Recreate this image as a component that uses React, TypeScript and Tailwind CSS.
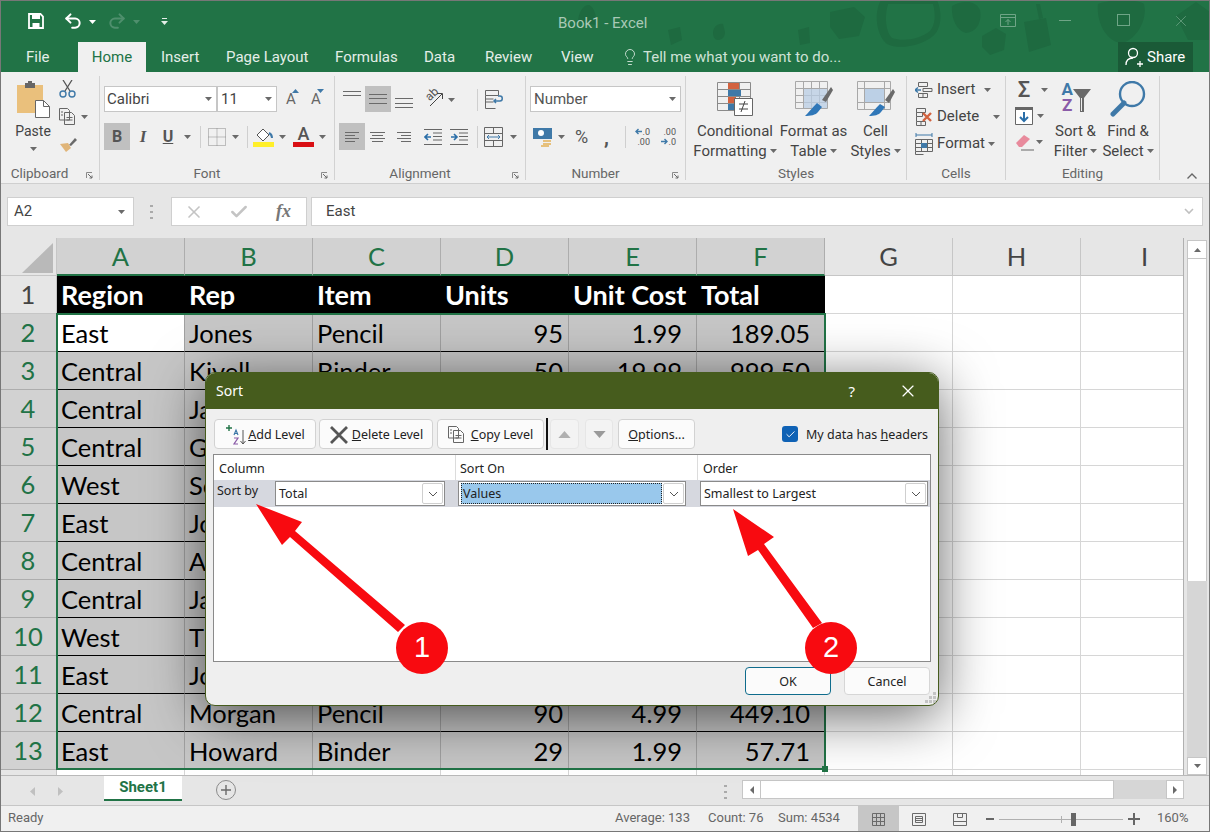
import type { ReactNode } from "react";
import { Check, Lightbulb, Redo2, Undo2, X } from "lucide-react";

const rows = [
  ["East", "Jones", "Pencil", "95", "1.99", "189.05"],
  ["Central", "Kivell", "Binder", "50", "19.99", "999.50"],
  ["Central", "Jardine", "Pencil", "36", "4.99", "179.64"],
  ["Central", "Gill", "Pen", "27", "19.99", "539.73"],
  ["West", "Sorvino", "Pencil", "56", "2.99", "167.44"],
  ["East", "Jones", "Binder", "60", "4.99", "299.40"],
  ["Central", "Andrews", "Pencil", "75", "1.99", "149.25"],
  ["Central", "Jardine", "Pencil", "90", "4.99", "449.10"],
  ["West", "Thompson", "Pencil", "32", "1.99", "63.68"],
  ["East", "Jones", "Binder", "60", "8.99", "539.40"],
  ["Central", "Morgan", "Pencil", "90", "4.99", "449.10"],
  ["East", "Howard", "Binder", "29", "1.99", "57.71"],
];
const heads = ["Region", "Rep", "Item", "Units", "Unit Cost", "Total"];

function Ic({ w, h, className, children }: { w: number; h: number; className?: string; children: ReactNode }) {
  return (
    <svg width={w} height={h} viewBox={`0 0 ${w} ${h}`} fill="none" className={`shrink-0 ${className ?? ""}`}>
      {children}
    </svg>
  );
}

function Caret({ className, color = "#6a6a6a" }: { className?: string; color?: string }) {
  return (
    <Ic w={7} h={4} className={className}>
      <path d="M0 0h7L3.5 4z" fill={color} />
    </Ic>
  );
}

function Lines({ w, ys, xs }: { w: number; ys: number[]; xs?: number[][] }) {
  return (
    <Ic w={w} h={16}>
      {ys.map((y, i) => (
        <path key={y} d={`M${xs ? xs[i][0] : 0} ${y + 0.5}H${xs ? xs[i][1] : w}`} stroke="#6a6a6a" />
      ))}
    </Ic>
  );
}

function Launcher({ className }: { className?: string }) {
  return (
    <Ic w={7} h={7} className={className}>
      <path d="M.5 6V.5H6" stroke="#8a8a8a" />
      <path d="M2 2l4 4M6 3.5V6H3.5" stroke="#6a6a6a" />
    </Ic>
  );
}

function Group({ w, label, launcher, children }: { w: string; label: string; launcher?: boolean; children: ReactNode }) {
  return (
    <div className={`relative flex h-[104px] flex-col border-r border-[#d2d2d2] ${w}`}>
      <div className="h-[90px]">{children}</div>
      <div className={`flex h-[14px] items-center justify-center text-[13.5px] leading-[14px] text-[#666] ${launcher ? "pr-[20px]" : ""}`}>{label}</div>
      {launcher && <Launcher className="absolute bottom-[1px] right-[6px]" />}
    </div>
  );
}

function Sep({ className }: { className?: string }) {
  return <div className={`h-[22px] w-px shrink-0 bg-[#cfcfcf] ${className ?? ""}`} />;
}

function BigBtn({ w, ml, icon, l1, l2 }: { w: string; ml: string; icon: ReactNode; l1: string; l2: string }) {
  return (
    <div className={`flex flex-col items-center pt-[5px] text-[15px] leading-[20px] text-[#444] ${w} ${ml}`}>
      <div className="flex h-[36px] items-center">{icon}</div>
      <div className="mt-[4px] whitespace-nowrap">{l1}</div>
      <div className="flex items-center gap-[3px] whitespace-nowrap">
        {l2}
        <Caret />
      </div>
    </div>
  );
}

function CellsRow({ icon, label, gap }: { icon: ReactNode; label: string; gap: string }) {
  return (
    <div className="flex h-[27px] items-center pl-[8px] text-[15px] text-[#444]">
      {icon}
      <span className="ml-[4px] whitespace-nowrap">{label}</span>
      <Caret className={gap} />
    </div>
  );
}

function Ribbon() {
  return (
    <div className="flex h-[112px] border-b border-[#cfcfcf] bg-[#f0f0f0] pt-[4px] font-['Roboto',sans-serif]">
      <Group w="w-[100px]" label="Clipboard" launcher>
        <div className="flex">
          <div className="ml-[16px] flex w-[34px] flex-col items-center pt-[4px]">
            <Ic w={34} h={38}>
              <path d="M1 5h26v28H1z" fill="#eac07c" />
              <path d="M9 3h10v5H9z" fill="#666" />
              <path d="M12 1h4v3h-4z" fill="#666" />
              <path d="M19.500 20.500h8l6 6v11h-14z" fill="#fff" stroke="#666" />
              <path d="M27.500 20.500v6h6" stroke="#666" />
            </Ic>
            <div className="mt-[4px] text-[14px] leading-[18px] text-[#444]">Paste</div>
            <Caret className="mt-[7px]" />
          </div>
          <div className="ml-[9px] flex flex-col pt-[4px]">
            <Ic w={17} h={18}>
              <path d="M4 0l7 11M13 0L6 11" stroke="#555" strokeWidth={1.3} />
              <circle cx="4" cy="14" r="3" stroke="#3f79a8" strokeWidth={1.4} />
              <circle cx="13" cy="14" r="3" stroke="#3f79a8" strokeWidth={1.4} />
            </Ic>
            <div className="mt-[10px] flex items-center gap-[4px]">
              <Ic w={18} h={17}>
                <path d="M.5.500h8l2 2V12H.5z M5.500 4.500h7l3 3v9h-10z" fill="#f0f0f0" stroke="#666" />
                <path d="M7.500 9.500h6M7.500 12h6M2 4h2M2 7h2" stroke="#666" />
              </Ic>
              <Caret />
            </div>
            <Ic w={18} h={16} className="mt-[11px]">
              <path d="M10 9l6-7 2 2-6 6z" fill="#6a6a6a" />
              <path d="M1 8l8-1 3 5-5 4z" fill="#e0b579" />
            </Ic>
          </div>
        </div>
      </Group>

      <Group w="w-[235px]" label="Font" launcher>
        <div className="flex items-center pl-[4px] pt-[10px]">
          <div className="flex h-[26px] w-[113px] items-center justify-between border border-[#c6c6c6] bg-white pl-[2px] pr-[4px] text-[15px] text-[#444]">
            Calibri
            <Caret />
          </div>
          <div className="flex h-[26px] w-[60px] items-center justify-between border border-[#c6c6c6] bg-white pl-[3px] pr-[4px] text-[15px] text-[#444]">
            11
            <Caret />
          </div>
          <div className="relative ml-[6px] w-[16px] text-center text-[15px] text-[#666]">
            A
            <Caret color="#3f79a8" className="absolute right-[0px] top-[1px] rotate-180" />
          </div>
          <div className="relative ml-[9px] w-[16px] text-center text-[15px] text-[#666]">
            A
            <Caret color="#3f79a8" className="absolute right-[0px] top-[1px]" />
          </div>
        </div>
        <div className="mt-[11px] flex h-[27px] items-center pl-[4px] text-[#555]">
          <div className="flex h-[27px] w-[26px] items-center justify-center bg-[#c0c0c0] text-[16px] font-bold">B</div>
          <div className="ml-[5px] w-[16px] text-center font-['Liberation_Serif',serif] text-[17px] font-bold italic">I</div>
          <div className="ml-[9px] w-[16px] text-center text-[16px] font-bold underline">U</div>
          <Caret className="ml-[8px]" />
          <Sep className="ml-[9px]" />
          <Ic w={18} h={18} className="ml-[7px]">
            <path d="M.5.500h17v17H.5z M9 .5v17M.5 9h17" stroke="#8a8a8a" strokeDasharray="1 1" />
          </Ic>
          <Caret className="ml-[6px]" />
          <Sep className="ml-[8px]" />
          <Ic w={21} h={21} className="ml-[5px]">
            <path d="M4 9l6-6 6 6-6 6z" fill="#fff" stroke="#555" />
            <path d="M16 7c2 1 3 3 3 5" stroke="#3f79a8" strokeWidth={2} />
            <path d="M0 16h21v5H0z" fill="#ffef2a" />
          </Ic>
          <Caret className="ml-[5px]" />
          <div className="relative ml-[7px] h-[21px] w-[21px] text-center text-[18px] font-medium leading-[16px]">
            A
            <div className="absolute bottom-0 left-0 h-[5px] w-[21px] bg-[#d90f14]" />
          </div>
          <Caret className="ml-[5px]" />
        </div>
      </Group>

      <Group w="w-[191px]" label="Alignment" launcher>
        <div className="flex h-[36px] items-end">
          <div className="mb-[5px] ml-[8px]"><Lines w={18} ys={[0, 4]} /></div>
          <div className="ml-[4px] flex h-[26px] w-[26px] items-center justify-center bg-[#c0c0c0]"><Lines w={18} ys={[3, 7, 12]} /></div>
          <div className="mb-[2px] ml-[4px]"><Lines w={18} ys={[4, 9, 13]} /></div>
          <div className="relative mb-[4px] ml-[11px] h-[20px] w-[20px] text-[#555]">
            <span className="absolute left-[1px] top-[-1px] -rotate-45 text-[12px] leading-[14px]">ab</span>
            <Ic w={20} h={20} className="absolute left-0 top-0">
              <path d="M6 18L18 6M13 5.500h5.500V11" stroke="#444" />
            </Ic>
          </div>
          <Caret className="mb-[10px] ml-[4px]" />
          <Sep className="mb-[1px] ml-[22px]" />
          <div className="mb-[2px] ml-[7px]">
            <Ic w={19} h={20}>
              <path d="M.5.500h13v5H.5zM.5 5.500v13h10M.5 12h8M.5 9h8" stroke="#666" />
              <path d="M9 11h6c3 0 3-5 0-5h-2M11 9l-2 2 2 2" stroke="#3f79a8" strokeWidth={1.5} />
            </Ic>
          </div>
        </div>
        <div className="mt-[11px] flex h-[27px] items-center">
          <div className="ml-[4px] flex h-[27px] w-[26px] items-center justify-center bg-[#c0c0c0]"><Lines w={14} ys={[3, 6, 9, 12]} xs={[[0, 14], [0, 10], [0, 14], [0, 10]]} /></div>
          <div className="ml-[5px]"><Lines w={17} ys={[3, 6, 9, 12]} xs={[[0, 15], [2, 13], [0, 15], [2, 13]]} /></div>
          <div className="ml-[9px]"><Lines w={16} ys={[3, 6, 9, 12]} xs={[[1, 15], [5, 15], [1, 15], [5, 15]]} /></div>
          <Ic w={18} h={18} className="ml-[12px]">
            <path d="M0 1.500h18M0 16.500h18M9 5h9M9 8.500h9M9 12h9" stroke="#666" />
            <path d="M7 9H1M4 6L1 9l3 3" stroke="#2a6ea8" strokeWidth={1.6} />
          </Ic>
          <Ic w={18} h={18} className="ml-[8px]">
            <path d="M0 1.500h18M0 16.500h18M9 5h9M9 8.500h9M9 12h9" stroke="#666" />
            <path d="M1 9h6M4 6l3 3-3 3" stroke="#2a6ea8" strokeWidth={1.6} />
          </Ic>
          <Sep className="ml-[9px]" />
          <Ic w={19} h={20} className="ml-[6px]">
            <path d="M.5.500h18v19H.5zM.5 6.500h18M.5 13.500h18M9.500.5v6M9.500 13.500v6" stroke="#666" />
            <path d="M3 10h13M5 8l-2 2 2 2M14 8l2 2-2 2" stroke="#3f79a8" />
          </Ic>
          <Caret className="ml-[7px]" />
        </div>
      </Group>

      <Group w="w-[160px]" label="Number" launcher>
        <div className="ml-[4px] mt-[10px] flex h-[26px] w-[151px] items-center justify-between border border-[#c6c6c6] bg-white pl-[3px] pr-[4px] text-[15px] text-[#555]">
          Number
          <Caret />
        </div>
        <div className="mt-[11px] flex h-[27px] items-center text-[#555]">
          <Ic w={20} h={20} className="ml-[7px]">
            <path d="M0 1h19v11H0z" fill="#3f79a8" />
            <circle cx="8" cy="6" r="3" fill="#fff" />
            <path d="M10 13h8v2h-8zM10 16h8v2h-8zM8 18h8v2H8z" fill="#e6c07c" />
          </Ic>
          <Caret className="ml-[5px]" />
          <div className="ml-[8px] w-[17px] text-center text-[18px]">%</div>
          <div className="ml-[13px] w-[7px] text-center text-[20px] font-bold leading-[14px]">,</div>
          <Sep className="ml-[15px]" />
          <div className="ml-[9px] flex w-[15px] flex-col items-end text-[9px] leading-[10px]">
            <span className="flex items-center gap-px"><Ic w={7} h={7}><path d="M7 3.500H1M3.500 1L1 3.500 3.500 6" stroke="#3f79a8" strokeWidth={1.4} /></Ic>.0</span>
            <span>.00</span>
          </div>
          <div className="ml-[10px] flex w-[16px] flex-col items-end text-[9px] leading-[10px]">
            <span>.00</span>
            <span className="flex items-center gap-px"><Ic w={7} h={7}><path d="M0 3.500h6M3.500 1L6 3.500 3.500 6" stroke="#3f79a8" strokeWidth={1.4} /></Ic>.0</span>
          </div>
        </div>
      </Group>

      <Group w="w-[221px]" label="Styles">
        <div className="flex">
          <BigBtn
            w="w-[84px]"
            ml="ml-[7px]"
            l1="Conditional"
            l2="Formatting"
            icon={
              <Ic w={36} h={36}>
                <path d="M.5 1.500h33v28H.5zM.5 8.500h33M.5 15.500h33M.5 22.500h33M11.500 1.500v28M22.500 1.500v28" stroke="#8a8a8a" />
                <path d="M11 2h11v6H11zM11 16h8v6h-8z" fill="#d2623f" />
                <path d="M11 9h13v6H11zM11 23h6v6h-6z" fill="#3f79a8" />
                <path d="M17.500 17.500h18v17h-18z" fill="#fff" stroke="#666" />
                <path d="M22 23h9M22 28h9M28 20l-4 11" stroke="#444" />
              </Ic>
            }
          />
          <BigBtn
            w="w-[65px]"
            ml="ml-[4px]"
            l1="Format as"
            l2="Table"
            icon={
              <Ic w={38} h={36}>
                <path d="M.5.500h32v27H.5zM.5 7.500h32M.5 14.500h32M.5 21.500h32M8.500.5v27M16.500.5v27M24.500.5v27" stroke="#a8a8a8" />
                <path d="M9 8h23v19H9z" fill="#b9cee4" opacity=".75" />
                <path d="M27 19l9-13 2 3-7 12z" fill="#6a6a6a" />
                <path d="M22 22l5 4-4 5c-2 3-8 4-13 4 3-3 7-8 12-13z" fill="#2f77b8" />
              </Ic>
            }
          />
          <BigBtn
            w="w-[49px]"
            ml="ml-[5px]"
            l1="Cell"
            l2="Styles"
            icon={
              <Ic w={38} h={36}>
                <path d="M.5.500h33v28H.5zM.5 7.500h33M7.500.5v28M.5 21.500h33M27.500.5v28" stroke="#a8a8a8" />
                <path d="M8 8h19v13H8z" fill="#bcd0e6" />
                <path d="M28 19l8-11 2 3-6 11z" fill="#6a6a6a" />
                <path d="M23 23l5 3-4 5c-2 3-7 4-12 4 3-3 6-7 11-12z" fill="#2f77b8" />
              </Ic>
            }
          />
        </div>
      </Group>

      <Group w="w-[99px]" label="Cells">
        <CellsRow
          label="Insert"
          gap="ml-[9px]"
          icon={
            <Ic w={18} h={16}>
              <path d="M3.500.5h9v4h-9zM3.500 11.500h9v4h-9zM8 11.500v4" stroke="#666" />
              <path d="M8 6.500h9v3H8z" fill="#eee" stroke="#666" />
              <path d="M6 8H0M3 5.500L0 8l3 2.500" stroke="#3f79a8" strokeWidth={1.4} />
            </Ic>
          }
        />
        <CellsRow
          label="Delete"
          gap="ml-[14px]"
          icon={
            <Ic w={18} h={18}>
              <path d="M1.500.5h9v4h-9zM1.500 4.500h6v4h-6zM1.500 8.500v5M1.500 13.500h9v4h-9zM6 13.500v4" stroke="#666" />
              <path d="M8 5l8 8M16 5l-8 8" stroke="#d2623f" strokeWidth={2.400} />
            </Ic>
          }
        />
        <CellsRow
          label="Format"
          gap="ml-[3px]"
          icon={
            <Ic w={18} h={22}>
              <path d="M1 2h16M1 0v4M17 0v4" stroke="#3f79a8" />
              <path d="M.5 6.500h17v12H.5zM.5 10.500h17M.5 14.500h17M6.500 6.500v12M12.500 6.500v12" stroke="#666" />
              <path d="M6 10h6v5H6z" fill="#3f79a8" />
              <path d="M.5 18.500v3h8" stroke="#666" />
            </Ic>
          }
        />
      </Group>

      <Group w="w-[154px]" label="Editing">
        <div className="flex">
          <div className="ml-[9px] w-[34px]">
            <div className="flex h-[26px] items-center gap-[8px] pt-[2px]">
              <div className="w-[18px] text-center text-[22px] font-medium leading-[20px] text-[#555]">Σ</div>
              <Caret />
            </div>
            <div className="flex h-[26px] items-center gap-[4px] pt-[1px]">
              <Ic w={18} h={18}>
                <path d="M.5.500h17v17H.5z" fill="#fff" stroke="#666" />
                <path d="M0 0h18v3H0z" fill="#666" />
                <path d="M9 5v9M5 10l4 4 4-4" stroke="#2a6ea8" strokeWidth={2} />
              </Ic>
              <Caret />
            </div>
            <div className="flex h-[26px] items-center gap-[4px] pt-[2px]">
              <Ic w={20} h={18}>
                <path d="M1 10l8-8 6 4-8 8H4z" fill="#e88a9c" />
                <path d="M6 17h13" stroke="#666" />
              </Ic>
              <Caret className="-ml-[3px]" />
            </div>
          </div>
          <div className="ml-[3px] flex w-[47px] flex-col items-center pt-[5px] text-[15px] leading-[20px] text-[#444]">
            <div className="flex h-[36px] w-[40px] pl-[6px]">
              <div className="flex flex-col items-center text-[17px] font-bold leading-[16px]">
                <span className="text-[#3f79a8]">A</span>
                <span className="text-[#8a5ba8]">Z</span>
              </div>
              <Ic w={18} h={24} className="mt-[8px]">
                <path d="M0 0h18l-7 9v14H7V9z" fill="#6a6a6a" />
                <path d="M8.500 9v13" stroke="#eee" />
              </Ic>
            </div>
            <div className="mt-[4px] whitespace-nowrap">Sort &amp;</div>
            <div className="flex items-center gap-[3px]">Filter<Caret /></div>
          </div>
          <div className="ml-[4px] flex w-[50px] flex-col items-center pt-[5px] text-[15px] leading-[20px] text-[#444]">
            <Ic w={36} h={36}>
              <circle cx="22" cy="13" r="12" stroke="#3f79a8" strokeWidth={2.400} />
              <path d="M14 22L3 33" stroke="#3f79a8" strokeWidth={5} strokeLinecap="round" />
            </Ic>
            <div className="mt-[4px] whitespace-nowrap">Find &amp;</div>
            <div className="flex items-center gap-[3px]">Select<Caret /></div>
          </div>
        </div>
      </Group>

      <div className="flex h-[104px] flex-1 items-end justify-end pb-[1px] pr-[13px]">
        <Ic w={10} h={6}>
          <path d="M.5 5.500L5 1l4.500 4.500" stroke="#666" strokeWidth={1.4} />
        </Ic>
      </div>
    </div>
  );
}

function TitleArea() {
  return (
    <div className="relative h-[72px] bg-[#217346] font-['Roboto',sans-serif] text-[15px]">
      <svg className="absolute inset-0" width={1210} height={72} fill="#1e6a40">
        <path d="M578 22c0-8 5-17 10-17s8 8 9 20zM668 30l12-3 2 13-11 5zM713 33c0-6 5-10 10-9l2 8c0 6-4 8-7 8s-5-3-5-7zM798 30l11-3 1 16-10 2zM830 12l24-5 11 10-6 19-20 3-9-12z" />
        <path fillRule="evenodd" d="M881 0h56c6 14 4 30-4 36-12 10-34 14-46 8-10-8-14-30-6-44zm7 4c-4 14-2 28 4 34 12 4 28 1 38-7 5-6 6-16 3-27z" />
        <path d="M952 6c10-6 24-6 28 4 2 10-2 22-14 23-10-2-15-16-14-27zM982 36l14-8 10 6-2 16-14 5-8-8zM1024 22l22-4 5 27-22 7zM1040 4l3 14-4 1-3-15zM1098 4c8-4 38-6 46 0 4 16-8 36-22 39-16-1-26-22-24-39zM1176 16l20-14 14 10v28l-22 0z" />
      </svg>
      <div className="relative flex h-[42px] items-start pt-[13px]">
        <Ic w={16} h={16} className="ml-[28px]">
          <path d="M1 1h11.500L15 3.500V15H1z" stroke="#fff" strokeWidth={1.8} />
          <path d="M4 1h8v5H4z" fill="#fff" />
          <path d="M4.500 15v-5h7v5z M7.500 11h2v4h-2z" fill="#fff" />
        </Ic>
        <Undo2 size={20} color="#fff" strokeWidth={2.400} className="ml-[19px] -mt-[2px]" />
        <Caret color="#fff" className="ml-[6px] mt-[7px]" />
        <Redo2 size={20} color="#4f8f6d" strokeWidth={2.400} className="ml-[11px] -mt-[2px]" />
        <Caret color="#4f8f6d" className="ml-[6px] mt-[7px]" />
        <Ic w={7} h={7} className="ml-[21px] mt-[5px]">
          <path d="M1 .5h5" stroke="#e4eee8" />
          <path d="M0 3h7L3.500 7z" fill="#e4eee8" />
        </Ic>
        <div className="absolute left-[558px] top-[14px] text-[15px] leading-[18px] text-[#a9c9b6]">Book1 - Excel</div>
        <div className="absolute left-[1000px] top-[14px]">
          <Ic w={16} h={13}>
            <path d="M.5.500h15v12H.5zM.5 3.500h15M8 11V5.500M5.500 8L8 5.500 10.500 8" stroke="#6fa587" />
          </Ic>
        </div>
        <div className="absolute left-[1059px] top-[20px] h-px w-[12px] bg-[#6fa587]" />
        <div className="absolute left-[1117px] top-[14px] h-[12px] w-[13px] border border-[#6fa587]" />
        <div className="absolute left-[1172px] top-[12px]">
          <X size={18} color="#6fa587" strokeWidth={1} />
        </div>
      </div>
      <div className="relative flex h-[30px] items-center text-[#e4eee8]">
        <div className="w-[78px] pl-[26px]">File</div>
        <div className="flex h-[30px] w-[68px] items-center justify-center bg-[#f0f0f0] text-[#217346]">Home</div>
        <div className="ml-[15px] flex gap-[29px] whitespace-nowrap">
          <span className="w-[36px]">Insert</span>
          <span className="w-[80px]">Page Layout</span>
          <span className="w-[60px]">Formulas</span>
          <span className="w-[32px]">Data</span>
          <span className="w-[47px]">Review</span>
          <span className="w-[32px]">View</span>
        </div>
        <Lightbulb size={18} color="#d5e6dc" strokeWidth={1.2} className="ml-[28px]" />
        <span className="ml-[4px] whitespace-nowrap text-[#cfe2d7]">Tell me what you want to do...</span>
        <div className="ml-auto mr-[17px] flex h-[30px] w-[75px] items-center gap-[4px] bg-[#1a5a37] pl-[7px] text-white">
          <Ic w={18} h={20}>
            <circle cx="8" cy="6" r="4.500" stroke="#fff" strokeWidth={1.3} />
            <path d="M1 18c0-5 3-7 7-7M12 17h6M15 14v6" stroke="#fff" strokeWidth={1.3} />
          </Ic>
          Share
        </div>
      </div>
    </div>
  );
}

function FormulaBar() {
  return (
    <div className="flex h-[54px] items-start bg-[#e6e6e6] pt-[13px] font-['Roboto',sans-serif] text-[15px] text-[#444]">
      <div className="ml-[7px] flex h-[29px] w-[127px] items-center justify-between border border-[#cfcfcf] bg-white pl-[6px] pr-[8px]">
        A2
        <Caret />
      </div>
      <div className="ml-[16px] mt-[8px] flex h-[14px] w-[3px] flex-col justify-between">
        <div className="h-[2px] w-[3px] bg-[#aaa]" />
        <div className="h-[2px] w-[3px] bg-[#aaa]" />
        <div className="h-[2px] w-[3px] bg-[#aaa]" />
      </div>
      <div className="ml-[18px] flex h-[29px] w-[136px] items-center border border-[#cfcfcf] bg-white">
        <X size={20} color="#c4c4c4" strokeWidth={2} className="ml-[12px]" />
        <Check size={20} color="#c4c4c4" strokeWidth={3} className="ml-[25px]" />
        <span className="ml-[27px] font-['Liberation_Serif',serif] text-[18px] font-bold italic text-[#777]">fx</span>
      </div>
      <div className="ml-[4px] flex h-[29px] w-[892px] items-center justify-between border border-[#cfcfcf] bg-white pl-[14px] pr-[8px]">
        East
        <Ic w={10} h={7}>
          <path d="M1 1l4 4 4-4" stroke="#c0c0c0" strokeWidth={1.6} />
        </Ic>
      </div>
    </div>
  );
}

function Sheet() {
  const letters = ["A", "B", "C", "D", "E", "F", "G", "H", "I"];
  return (
    <div className="flex h-[537px] bg-[#e6e6e6]">
      <div className="relative w-[1184px] overflow-hidden border-r border-[#b0b0b0] bg-white font-['Lato',sans-serif] text-[25.5px] text-black">
        <div className="grid w-[1209px] grid-cols-[57px_repeat(9,128px)] grid-rows-[repeat(14,38px)_5px]">
          <div className="relative border-b border-r border-[#c6c6c6] bg-[#e6e6e6]">
            <Ic w={31} h={30} className="absolute left-[22px] top-[5px]">
              <path d="M31 0v30H0z" fill="#b9b9b9" />
            </Ic>
          </div>
          {letters.map((l, i) =>
            i < 6 ? (
              <div key={l} className="flex items-center justify-center border-b-2 border-r border-b-[#217346] border-r-[#adadad] bg-[#d2d2d2] text-[#217346]">{l}</div>
            ) : (
              <div key={l} className="flex items-center justify-center border-b border-r border-[#c6c6c6] bg-[#e6e6e6] text-[#444]">{l}</div>
            ),
          )}

          <div className="flex items-center justify-center border-b border-r border-[#c6c6c6] bg-[#e6e6e6] text-[#444]">1</div>
          {heads.map((h) => (
            <div key={h} className="flex items-center bg-black pl-[4px] pt-[1px] text-[27px] font-bold text-white">{h}</div>
          ))}
          <div className="border-b border-r border-[#d6d6d6]" />
          <div className="border-b border-r border-[#d6d6d6]" />
          <div className="border-b border-r border-[#d6d6d6]" />

          {rows.map((r, i) => (
            <div key={i} className="contents">
              <div className="flex items-center justify-center border-b border-r border-[#adadad] bg-[#d2d2d2] text-[#217346]">{i + 2}</div>
              {r.map((c, j) => (
                <div
                  key={j}
                  className={`flex items-center border-b border-r border-b-black border-r-[#a0a0a0] pt-[1px] ${i === 0 && j === 0 ? "bg-white" : "bg-[#c6c6c6]"} ${j === 3 ? "justify-end pr-[5px]" : j > 3 ? "justify-end pr-[14px]" : "pl-[4px]"}`}
                >
                  {c}
                </div>
              ))}
              <div className="border-b border-r border-[#d6d6d6]" />
              <div className="border-b border-r border-[#d6d6d6]" />
              <div className="border-b border-r border-[#d6d6d6]" />
            </div>
          ))}

          <div className="border-r border-[#c6c6c6] bg-[#e6e6e6]" />
          {letters.map((l) => (
            <div key={l} className="border-r border-[#d6d6d6]" />
          ))}
        </div>
        <div className="absolute left-[56px] top-[75px] h-[457px] w-[770px] border-2 border-[#217346]" />
        <div className="absolute left-[822px] top-[528px] h-[6px] w-[6px] bg-[#217346]" />
      </div>
      <div className="ml-[3px] flex w-[20px] flex-col pt-[2px]">
        <div className="flex h-[19px] items-center justify-center border border-[#c6c6c6] bg-white">
          <Caret className="rotate-180" />
        </div>
        <div className="h-[322px] border-x border-[#c6c6c6] bg-white" />
        <div className="flex-1 bg-[#d6d6d6]" />
        <div className="flex h-[18px] items-center justify-center border border-[#c6c6c6] bg-white">
          <Caret />
        </div>
      </div>
    </div>
  );
}

function Tabs() {
  return (
    <div className="flex h-[30px] border-t border-[#b9b9b9] bg-[#e6e6e6] font-['Roboto',sans-serif]">
      <Ic w={5} h={9} className="ml-[30px] mt-[11px]">
        <path d="M5 0v9L0 4.500z" fill="#c0c0c0" />
      </Ic>
      <Ic w={5} h={9} className="ml-[23px] mt-[11px]">
        <path d="M0 0v9l5-4.500z" fill="#c0c0c0" />
      </Ic>
      <div className="ml-[41px] flex h-[25px] w-[78px] items-center justify-center border-b-2 border-[#217346] bg-white text-[15px] font-bold text-[#217346]">Sheet1</div>
      <Ic w={20} h={20} className="ml-[34px] mt-[4px]">
        <circle cx="10" cy="10" r="9.500" stroke="#8a8a8a" />
        <path d="M5 10h10M10 5v10" stroke="#6a6a6a" strokeWidth={1.400} />
      </Ic>
      <div className="ml-[488px] mt-[9px] flex h-[14px] w-[3px] flex-col justify-between">
        <div className="h-[2px] w-[3px] bg-[#aaa]" />
        <div className="h-[2px] w-[3px] bg-[#aaa]" />
        <div className="h-[2px] w-[3px] bg-[#aaa]" />
      </div>
      <div className="ml-[15px] mt-[4px] flex h-[19px] w-[442px]">
        <div className="flex w-[19px] items-center justify-center border border-[#c6c6c6] bg-white">
          <Ic w={4} h={8}><path d="M4 0v8L0 4z" fill="#6a6a6a" /></Ic>
        </div>
        <div className="w-[353px] border-y border-r border-[#c6c6c6] bg-white" />
        <div className="flex-1 bg-[#d6d6d6]" />
        <div className="flex w-[18px] items-center justify-center border border-[#c6c6c6] bg-white">
          <Ic w={4} h={8}><path d="M0 0v8l4-4z" fill="#6a6a6a" /></Ic>
        </div>
      </div>
    </div>
  );
}

function StatusBar() {
  return (
    <div className="flex h-[27px] items-center border-t border-[#c6c6c6] bg-[#f0f0f0] font-['Roboto',sans-serif] text-[13px] text-[#666]">
      <span className="mb-[2px] ml-[8px] w-[36px]">Ready</span>
      <span className="mb-[2px] ml-[571px] w-[76px] whitespace-nowrap">Average: 133</span>
      <span className="mb-[2px] ml-[17px] w-[54px] whitespace-nowrap">Count: 76</span>
      <span className="mb-[2px] ml-[16px] w-[60px] whitespace-nowrap">Sum: 4534</span>
      <div className="ml-[20px] flex h-[26px] w-[41px] items-center justify-center bg-[#c6c6c6]">
        <Ic w={13} h={13}>
          <path d="M.5.500h12v12H.5zM.5 4.500h12M.5 8.500h12M4.500.5v12M8.500.5v12" stroke="#6a6a6a" />
        </Ic>
      </div>
      <Ic w={14} h={13} className="ml-[13px]">
        <path d="M.5.500h13v12H.5z" stroke="#6a6a6a" />
        <path d="M3.500 3.500h7v6h-7zM3.500 5.500h7M3.500 7.500h7" stroke="#6a6a6a" />
      </Ic>
      <Ic w={14} h={13} className="ml-[27px]">
        <path d="M.5 12.500v-12h13v12zM.5 8.500h13M4.500.5v4h5v-4" stroke="#6a6a6a" />
      </Ic>
      <div className="ml-[19px] h-[2px] w-[8px] bg-[#666]" />
      <div className="relative ml-[5px] h-px w-[124px] bg-[#b0b0b0]">
        <div className="absolute left-[62px] top-[-3px] h-[7px] w-px bg-[#b0b0b0]" />
        <div className="absolute left-[72px] top-[-6px] h-[13px] w-[5px] bg-[#666]" />
      </div>
      <Ic w={12} h={12} className="ml-[5px]">
        <path d="M0 6h12M6 0v12" stroke="#666" strokeWidth={2} />
      </Ic>
      <span className="mb-[2px] ml-[17px]">160%</span>
    </div>
  );
}

function DlgBtn({ w, ml, dim, children }: { w: string; ml?: string; dim?: boolean; children: ReactNode }) {
  return (
    <div className={`flex h-[30px] items-center justify-center rounded-[4px] border pt-[1px] ${dim ? "border-[#e6e6e6] bg-[#f3f3f3]" : "border-[#d2d2d2] bg-[#fbfbfb]"} ${w} ${ml ?? ""}`}>
      {children}
    </div>
  );
}

function Combo({ w, ml, text, hl }: { w: string; ml: string; text: string; hl?: boolean }) {
  return (
    <div className={`flex h-[25px] items-center border border-[#8a8a8a] bg-white pl-[2px] pr-[1px] ${w} ${ml}`}>
      <div className={`mr-[1px] flex h-[21px] flex-1 items-center pl-[1px] ${hl ? "border border-dotted border-[#222] bg-[#99c8ec]" : ""}`}>{text}</div>
      <div className="flex h-[21px] w-[21px] items-center justify-center rounded-[2px] border border-[#cfcfcf]">
        <Ic w={10} h={6}>
          <path d="M1 1l4 4 4-4" stroke="#555" />
        </Ic>
      </div>
    </div>
  );
}

function SortDialog() {
  return (
    <div className="absolute left-[205px] top-[372px] h-[334px] w-[734px] overflow-hidden rounded-[10px] border border-[#465c1d] bg-[#efefef] font-['Noto_Sans',sans-serif] text-[12.500px] leading-[16px] text-[#222] shadow-[0_10px_55px_rgba(0,0,0,0.6)]">
      <div className="flex h-[36px] items-center justify-between bg-[#465c1d] pb-[1px] pl-[10px] pr-[20px] text-white">
        <span className="text-[14px]">Sort</span>
        <div className="flex items-center gap-[43px]">
          <span className="text-[15px]">?</span>
          <X size={20} color="#fff" strokeWidth={1.4} />
        </div>
      </div>
      <div className="flex items-center pl-[8px] pt-[9px]">
        <DlgBtn w="w-[102px]">
          <Ic w={22} h={22} className="mr-[1px]">
            <path d="M4 1v6M1 4h6" stroke="#217346" strokeWidth={1.4} />
            <path d="M18 6v14M15.500 17l2.500 3 2.500-3" stroke="#555" />
            <path d="M9 11l2-5 2 5M9.800 9.500h2.400" stroke="#3f79a8" strokeWidth={1.200} />
            <path d="M9 14h4l-4 6h4" stroke="#8a5ba8" strokeWidth={1.200} />
          </Ic>
          <span><u>A</u>dd Level</span>
        </DlgBtn>
        <DlgBtn w="w-[114px]" ml="ml-[3px]">
          <Ic w={20} h={18} className="mr-[3px]">
            <path d="M2 1l16 16M18 1L2 17" stroke="#555" strokeWidth={2.800} />
          </Ic>
          <span><u>D</u>elete Level</span>
        </DlgBtn>
        <DlgBtn w="w-[107px]" ml="ml-[4px]">
          <Ic w={18} h={17} className="mr-[5px]">
            <path d="M.5.500h8l2 2V12H.5z M5.500 4.500h7l3 3v9h-10z" fill="#fbfbfb" stroke="#666" />
            <path d="M7.500 9.500h6M7.500 12h6M2 4h2M2 7h2" stroke="#666" />
          </Ic>
          <span><u>C</u>opy Level</span>
        </DlgBtn>
        <div className="ml-[2px] h-[32px] w-[2px] bg-[#111]" />
        <DlgBtn dim w="w-[29px]" ml="ml-[2px]">
          <Caret color="#b0b0b0" className="h-[7px] w-[13px] rotate-180" />
        </DlgBtn>
        <DlgBtn dim w="w-[28px]" ml="ml-[6px]">
          <Caret color="#9a9a9a" className="h-[7px] w-[13px]" />
        </DlgBtn>
        <DlgBtn w="w-[77px]" ml="ml-[5px]">
          <span><u>O</u>ptions...</span>
        </DlgBtn>
        <div className="ml-[87px] flex h-[16px] w-[16px] items-center justify-center rounded-[3px] bg-[#0f62b5]">
          <Check size={11} color="#fff" strokeWidth={2} />
        </div>
        <span className="ml-[8px] mt-[1px] whitespace-nowrap">My data has <u>h</u>eaders</span>
      </div>
      <div className="ml-[7px] mt-[4px] h-[208px] w-[718px] border border-[#8a8a8a] bg-white">
        <div className="flex h-[25px] items-center">
          <div className="h-full w-[242px] border-r border-[#dcdcdc] pl-[5px] pt-[6px]">Column</div>
          <div className="h-full w-[242px] border-r border-[#dcdcdc] pl-[4px] pt-[6px]">Sort On</div>
          <div className="h-full flex-1 pl-[5px] pt-[6px]">Order</div>
        </div>
        <div className="flex h-[27px] items-center bg-[#d6d8df]">
          <div className="h-full w-[61px] pl-[3px] pt-[3px]">Sort by</div>
          <Combo w="w-[170px]" ml="" text="Total" />
          <Combo w="w-[228px]" ml="ml-[13px]" text="Values" hl />
          <Combo w="w-[228px]" ml="ml-[14px]" text="Smallest to Largest" />
        </div>
      </div>
      <div className="ml-[539px] mt-[5px] flex">
        <div className="flex h-[28px] w-[86px] items-center justify-center rounded-[4px] border border-[#0f6c8c] bg-[#fbfbfb] pt-[1px]">OK</div>
        <div className="ml-[13px] flex h-[28px] w-[86px] items-center justify-center rounded-[4px] border border-[#d6d6d6] bg-[#fbfbfb] pt-[1px]">Cancel</div>
      </div>
      <Ic w={12} h={12} className="absolute bottom-[1px] right-[1px]">
        <path d="M8 0h3v3H8zM4 4h3v3H4zM8 4h3v3H8zM0 8h3v3H0zM4 8h3v3H4zM8 8h3v3H8z" fill="#c4c4c4" />
      </Ic>
    </div>
  );
}

function Callouts() {
  return (
    <>
      <svg className="pointer-events-none absolute left-0 top-0" width={1210} height={832} fill="#f80a10">
        <path d="M256 504L302 522 295 531 405 625 398 632 290 537 282 545z" />
        <path d="M733 509L774 537 764 544 822 623 813 628 758 550 748 556z" />
      </svg>
      <div className="absolute left-[396px] top-[622px] flex h-[52px] w-[52px] items-center justify-center rounded-full bg-[#f80a10] font-['Liberation_Sans',sans-serif] text-[29px] text-white">1</div>
      <div className="absolute left-[805px] top-[622px] flex h-[52px] w-[52px] items-center justify-center rounded-full bg-[#f80a10] font-['Liberation_Sans',sans-serif] text-[29px] text-white">2</div>
    </>
  );
}

export default function App() {
  return (
    <div className="relative h-[832px] w-[1210px] overflow-hidden">
      <TitleArea />
      <Ribbon />
      <FormulaBar />
      <Sheet />
      <Tabs />
      <StatusBar />
      <SortDialog />
      <Callouts />
      <div className="pointer-events-none absolute inset-0 border border-[#777]" />
    </div>
  );
}
